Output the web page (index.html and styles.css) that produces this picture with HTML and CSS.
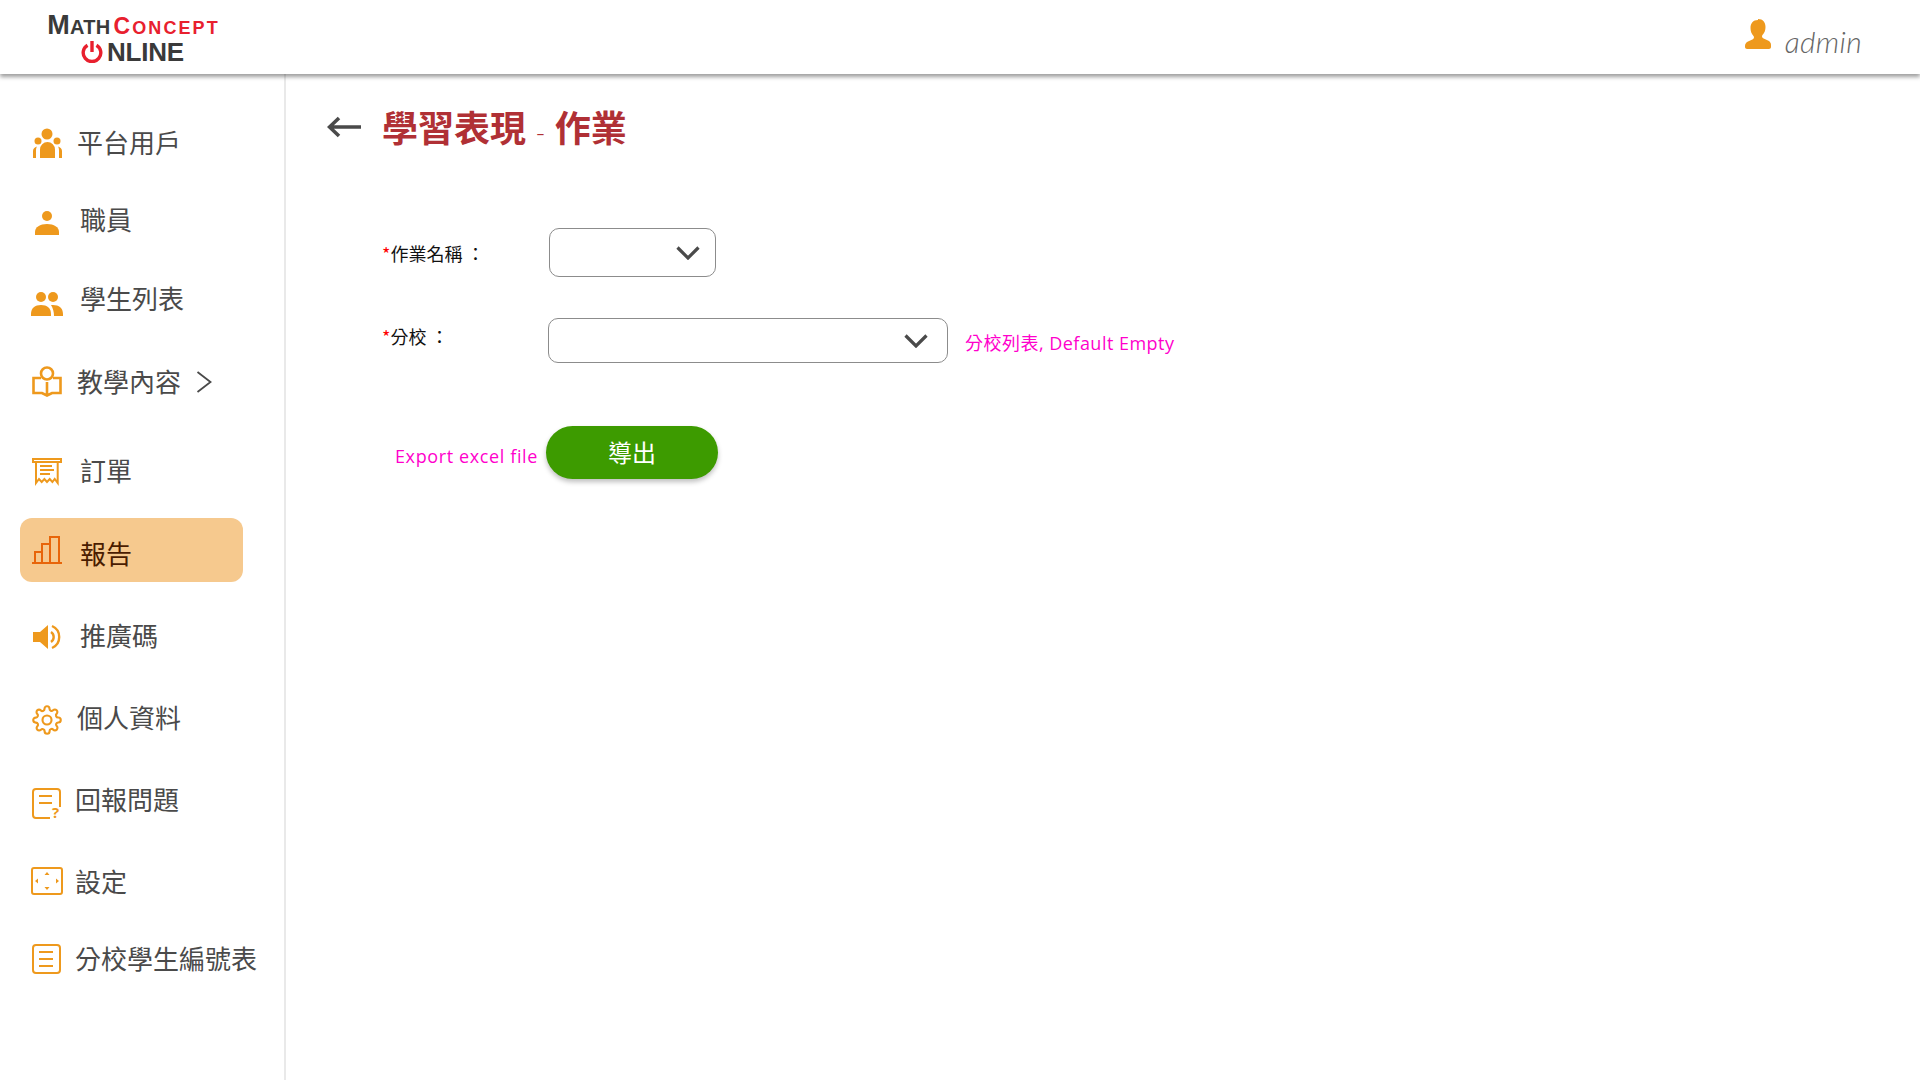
FILE: index.html
```html
<!DOCTYPE html>
<html lang="zh-Hant">
<head>
<meta charset="utf-8">
<title>學習表現 - 作業</title>
<link rel="stylesheet" href="styles.css">
</head>
<body>
<header class="topbar">
  <a class="logo">
    <span class="logo-top"><span class="logo-dark"><span class="logo-big">M</span>ATH</span><span class="logo-red"><span class="logo-big">C</span>ONCEPT</span></span>
    <span class="logo-bottom">
      <svg class="power" viewBox="0 0 22 22"><path d="M6.500 4.200a8.800 8.800 0 1 0 9 0" fill="none" stroke="#e8202e" stroke-width="3.400"/><path d="M11 0v11" stroke="#e8202e" stroke-width="3.400"/></svg>
      <span class="logo-online">NLINE</span>
    </span>
  </a>
  <div class="user">
    <svg class="user-icon" viewBox="0 0 26 30"><path d="M13 0c5 0 7.500 3.500 7.500 8 0 3-1 6-3 8-.8 1-.6 2.500.6 3.200l4.900 2.300c2 1 3 2.500 3 4.500V28c0 1-1 2-2 2H2c-1 0-2-1-2-2v-1c0-2 1-3.500 3-4.500l4.900-2.300c1.200-.7 1.400-2.200.6-3.200-2-2-3-5-3-8 0-4.500 2.500-8 7.500-8z" fill="#ee991d"/></svg>
    <span class="user-name">admin</span>
  </div>
</header>
<div class="shell">
  <nav class="sidebar">
    <a class="nav-item gap-m">
      <svg class="nav-icon" viewBox="0 0 34 34"><g fill="#ee991d"><circle cx="17" cy="8" r="5.500"/><circle cx="8" cy="15" r="3.500"/><circle cx="27" cy="15" r="3.500"/><path d="M10 32V23.500a7.500 7.500 0 0 1 15 0V32z"/><path d="M3 32V25c0-2 1.500-4 4-4.500-.6 1-1 2.500-1 4V32z"/><path d="M32 32V25c0-2-1.500-4-4-4.500 .6 1 1 2.500 1 4V32z"/></g></svg>
      <span class="nav-label">平台用戶</span>
    </a>
    <a class="nav-item gap-l">
      <svg class="nav-icon" viewBox="0 0 34 34"><g fill="#ee991d"><circle cx="17" cy="13" r="5"/><path d="M5 32v-3c0-5 5-8 12-8s12 3 12 8v3z"/></g></svg>
      <span class="nav-label">職員</span>
    </a>
    <a class="nav-item gap-l">
      <svg class="nav-icon" viewBox="0 0 34 34"><g fill="#ee991d"><circle cx="11" cy="15" r="5"/><circle cx="23" cy="15" r="5"/><path d="M1 34v-2c0-6 4-9 10-9s10 3 10 9v2z"/><path d="M23 23c6 0 10 3 10 9v2h-9c0-4-1-8-3-11z"/></g></svg>
      <span class="nav-label">學生列表</span>
    </a>
    <a class="nav-item gap-m">
      <svg class="nav-icon" viewBox="0 0 34 34"><g fill="none" stroke="#ee991d" stroke-width="2.600"><circle cx="17" cy="8.500" r="6"/><path d="M17 17v13M11 13H3.500v15H12l5 2.500 5-2.500h8.500V13H23"/></g></svg>
      <span class="nav-label">教學內容</span>
      <svg class="nav-chevron" viewBox="0 0 16 22"><path d="M1.500 1l13 10-13 10" fill="none" stroke="#4a4a4a" stroke-width="1.800"/></svg>
    </a>
    <a class="nav-item gap-l">
      <svg class="nav-icon" viewBox="0 0 34 34"><g fill="none" stroke="#ee991d" stroke-width="2"><path d="M3 5h28v3H3z"/><path d="M6 8v21l3-4 2.700 3 2.700-3 2.600 3 2.700-3 2.700 3 2.300-3 3 4V8"/><path d="M10 12h12M10 16h14M10 20h10"/></g></svg>
      <span class="nav-label">訂單</span>
    </a>
    <a class="nav-item gap-l is-active">
      <svg class="nav-icon" viewBox="0 0 34 34"><g fill="none" stroke="#e8650a" stroke-width="2"><path d="M2 30h30"/><path d="M5 30V19h7v11M12 30V11h8v19M20 30V4h9v26"/></g></svg>
      <span class="nav-label">報告</span>
    </a>
    <a class="nav-item gap-l">
      <svg class="nav-icon" viewBox="0 0 34 34"><path d="M3 13h7l8-7v24l-8-7H3z" fill="#ee991d"/><g fill="none" stroke="#ee991d"><path d="M21 13a6 6 0 0 1 0 10" stroke-width="2.400"/><path d="M22 7a12 12 0 0 1 0 22" stroke-width="2.400"/></g></svg>
      <span class="nav-label">推廣碼</span>
    </a>
    <a class="nav-item gap-m">
      <svg class="nav-icon" viewBox="0 0 34 34"><g transform="translate(2 4) scale(1.250)" fill="none" stroke="#ee991d" stroke-width="1.700"><circle cx="12" cy="12" r="3.600"/><path d="M19.400 15a1.650 1.650 0 0 0 .33 1.820l.06.06a2 2 0 0 1 0 2.830 2 2 0 0 1-2.830 0l-.06-.06a1.650 1.650 0 0 0-1.820-.33 1.650 1.650 0 0 0-1 1.510V21a2 2 0 0 1-2 2 2 2 0 0 1-2-2v-.09A1.650 1.650 0 0 0 9 19.400a1.650 1.650 0 0 0-1.820.33l-.06.06a2 2 0 0 1-2.830 0 2 2 0 0 1 0-2.830l.06-.06a1.650 1.650 0 0 0 .33-1.820 1.650 1.650 0 0 0-1.510-1H3a2 2 0 0 1-2-2 2 2 0 0 1 2-2h.09A1.650 1.650 0 0 0 4.600 9a1.650 1.650 0 0 0-.33-1.820l-.06-.06a2 2 0 0 1 0-2.830 2 2 0 0 1 2.830 0l.06.06a1.650 1.650 0 0 0 1.820.33H9a1.650 1.650 0 0 0 1-1.510V3a2 2 0 0 1 2-2 2 2 0 0 1 2 2v.09a1.650 1.650 0 0 0 1 1.510 1.650 1.650 0 0 0 1.820-.33l.06-.06a2 2 0 0 1 2.830 0 2 2 0 0 1 0 2.830l-.06.06a1.650 1.650 0 0 0-.33 1.820V9a1.650 1.650 0 0 0 1.510 1H21a2 2 0 0 1 2 2 2 2 0 0 1-2 2h-.09a1.650 1.650 0 0 0-1.510 1z"/></g></svg>
      <span class="nav-label">個人資料</span>
    </a>
    <a class="nav-item gap-s">
      <svg class="nav-icon" viewBox="0 0 34 34"><g fill="none" stroke="#ee991d" stroke-width="2"><path d="M30 24V9a3 3 0 0 0-3-3H6a3 3 0 0 0-3 3v23a3 3 0 0 0 3 3h14"/><path d="M9 13h13M9 20h13"/></g><text x="22" y="35" class="icon-q">?</text></svg>
      <span class="nav-label">回報問題</span>
    </a>
    <a class="nav-item gap-s">
      <svg class="nav-icon" viewBox="0 0 34 34"><rect x="2" y="3" width="30" height="26" rx="2" fill="none" stroke="#ee991d" stroke-width="2"/><path d="M14.500 10l2.500-3 2.500 3zM14.500 22l2.500 3 2.500-3zM8 13.500l-3 2.500 3 2.500zM26 13.500l3 2.500-3 2.500z" fill="#ee991d"/></svg>
      <span class="nav-label">設定</span>
    </a>
    <a class="nav-item gap-s">
      <svg class="nav-icon" viewBox="0 0 34 34"><g fill="none" stroke="#ee991d" stroke-width="2"><rect x="3" y="3" width="27" height="28" rx="3"/><path d="M9 10h14M9 17h14M9 24h14"/></g></svg>
      <span class="nav-label">分校學生編號表</span>
    </a>
  </nav>
  <main class="content">
    <div class="page-head">
      <svg class="back" viewBox="0 0 34 22"><path d="M12 2L2.500 11l9.500 9M3 11h31" fill="none" stroke="#4a4a4a" stroke-width="3.600"/></svg>
      <h1 class="page-title">學習表現 <span class="title-dash">-</span> 作業</h1>
    </div>
    <form class="form">
      <div class="form-row row-name">
        <label class="form-label label-name"><span class="req">*</span>作業名稱 ：</label>
        <div class="select select-s">
          <svg class="chevron" viewBox="0 0 24 14"><path d="M1.500 1.500L12 12 22.500 1.500" fill="none" stroke="#4a4a4a" stroke-width="3.200"/></svg>
        </div>
      </div>
      <div class="form-row row-branch">
        <label class="form-label label-branch"><span class="req">*</span>分校 ：</label>
        <div class="select select-l">
          <svg class="chevron" viewBox="0 0 24 14"><path d="M1.500 1.500L12 12 22.500 1.500" fill="none" stroke="#4a4a4a" stroke-width="3.200"/></svg>
        </div>
        <span class="note note-branch">分校列表, Default Empty</span>
      </div>
      <div class="form-row row-export">
        <span class="note note-export">Export excel file</span>
        <button class="export-btn" type="button">導出</button>
      </div>
    </form>
  </main>
</div>
</body>
</html>
```

FILE: styles.css
```css
* { box-sizing: border-box; }
html, body { margin: 0; height: 100%; }
body {
  background: #fff;
  overflow: hidden;
  font-family: "Open Sans", "Noto Sans CJK TC", sans-serif;
  color: #4a4a4a;
}

.topbar {
  position: relative;
  z-index: 2;
  height: 74px;
  background: #fff;
  box-shadow: 0 3px 4px rgba(0, 0, 0, .38);
  display: flex;
  align-items: center;
  justify-content: space-between;
  padding: 0 58px 0 48px;
}
.logo { display: flex; flex-direction: column; align-items: center; width: 171px; font-family: "Liberation Sans", sans-serif; font-weight: 700; line-height: 1; padding-top: 3px; }
.logo-top { display: flex; align-items: baseline; gap: 3px; height: 27px; font-size: 20px; white-space: nowrap; }
.logo-big { font-size: 27px; }
.logo-dark { color: #3a3a3a; letter-spacing: .3px; }
.logo-red { color: #e8202e; font-size: 18px; letter-spacing: 2.100px; }
.logo-red .logo-big { font-size: 23px; }
.logo-bottom { display: flex; align-items: center; height: 26px; gap: 4px; margin-left: -2px; }
.power { width: 22px; height: 22px; }
.logo-online { font-size: 26px; color: #3a3a3a; letter-spacing: -.2px; }

.user { display: flex; align-items: center; gap: 14px; }
.user-icon { width: 26px; height: 30px; margin-bottom: 6px; }
.user-name { font-family: Lato, sans-serif; font-weight: 300; font-style: italic; font-size: 30px; color: #666; line-height: 1; letter-spacing: .3px; margin-top: 8px; }

.shell { display: flex; height: 1006px; }

.sidebar {
  width: 286px;
  flex: none;
  border-right: 2px solid #e9e9e9;
  padding: 30px 0 0 20px;
  display: grid;
  grid-template-columns: 223px;
  grid-template-rows: 78px 76px 82px 84px 94px 64px 108px 56px 108px 56px 98px;
  align-content: start;
}
.nav-item {
  display: flex;
  align-items: center;
  padding-left: 10px;
  border-radius: 12px;
  font-family: "Noto Sans CJK TC", sans-serif;
  font-size: 26px;
  white-space: nowrap;
  color: #4a4a4a;
}
.nav-icon { width: 34px; height: 34px; flex: none; overflow: visible; }
.nav-label { line-height: 1; margin-bottom: 2px; }
.gap-s .nav-icon { margin-right: 11px; }
.gap-m .nav-icon { margin-right: 13px; }
.gap-l .nav-icon { margin-right: 16px; }
.nav-chevron { width: 16px; height: 22px; margin-left: 15px; }
.is-active { background: #f6c98e; color: #4a1c00; }
.is-active .nav-label { margin: 6px 0 0; }
.icon-q { font-family: "Open Sans", sans-serif; font-size: 15px; font-weight: 700; fill: #ee991d; }

.content { flex: 1; padding: 30px 0 0 41px; min-width: 0; }
.page-head { display: flex; align-items: center; gap: 21px; height: 46px; }
.back { width: 34px; height: 22px; }
.page-title { margin: 0 0 2px; font-family: "Noto Sans CJK TC", sans-serif; font-size: 36px; font-weight: 700; line-height: 1; color: #b03035; white-space: pre; }
.title-dash { font-family: "Open Sans", sans-serif; font-weight: 300; font-size: 26px; margin: 0 2px; }

.form { margin: 78px 0 0 55px; }
.form-row { display: flex; }
.form-label { width: 167px; flex: none; font-family: "Noto Sans CJK TC", sans-serif; font-size: 18px; color: #111; line-height: 1; white-space: pre; }
.label-name { padding-top: 16px; }
.label-branch { padding-top: 9px; }
.req { color: #f00; }
.select {
  display: flex;
  align-items: center;
  justify-content: flex-end;
  background: #fff;
  border: 1px solid #8c8c8c;
  border-radius: 10px;
}
.select-s { width: 167px; height: 49px; padding-right: 15px; }
.select-l { width: 400px; height: 45px; padding-right: 19px; margin-left: -1px; }
.chevron { width: 24px; height: 14px; }
.row-branch { margin-top: 41px; align-items: flex-start; }
.note { color: #ff00cc; font-family: "Open Sans", "Noto Sans CJK TC", sans-serif; font-size: 18px; line-height: 1; white-space: nowrap; letter-spacing: .48px; }
.note-branch { margin: 16px 0 0 17px; }
.row-export { margin-top: 63px; align-items: center; padding-left: 13px; }
.note-export { margin: 6px 8px 0 0; letter-spacing: .62px; }
.export-btn {
  width: 172px;
  height: 53px;
  border: 0;
  border-radius: 27px;
  background: #3d9b00;
  color: #fff;
  font-family: "Noto Sans CJK TC", sans-serif;
  font-size: 24px;
  box-shadow: 0 3px 5px rgba(0, 0, 0, .25);
  padding: 0 0 2px;
}
```
